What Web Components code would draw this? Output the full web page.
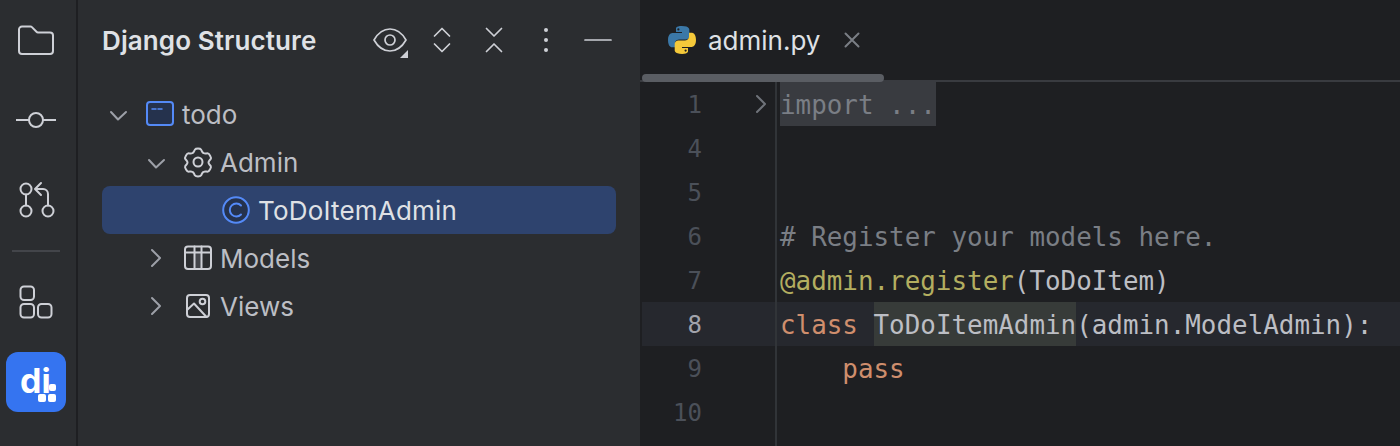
<!DOCTYPE html>
<html>
<head>
<meta charset="utf-8">
<title>Django Structure</title>
<style>
    html, body { margin: 0; height: 100%; background: #1e1f22; overflow: hidden; }
    body { display: flex; height: 446px; font-family: Inter, "Liberation Sans", sans-serif; }
</style>
</head>
<body>
<tool-stripe></tool-stripe>
<structure-panel>
    <tree-row level="0" arrow="open" icon="module">todo</tree-row>
    <tree-row level="1" arrow="open" icon="gear">Admin</tree-row>
    <tree-row level="2" icon="class" selected>ToDoItemAdmin</tree-row>
    <tree-row level="1" arrow="closed" icon="table">Models</tree-row>
    <tree-row level="1" arrow="closed" icon="image">Views</tree-row>
</structure-panel>
<editor-pane>
    <code-line num="1" fold><span class="folded">import ...</span></code-line>
    <code-line num="4"></code-line>
    <code-line num="5"></code-line>
    <code-line num="6"><span style="color:#7a7e85"># Register your models here.</span></code-line>
    <code-line num="7"><span style="color:#b3ae60">@admin.register</span>(ToDoItem)</code-line>
    <code-line num="8" current><span style="color:#cf8e6d">class</span> <span style="background:#373b39;display:inline-block;height:44px">ToDoItemAdmin</span>(admin.ModelAdmin):</code-line>
    <code-line num="9">    <span style="color:#cf8e6d">pass</span></code-line>
    <code-line num="10"></code-line>
    <code-line num=""></code-line>
</editor-pane>

<script>
const ICONS = {
    folder: '<path d="M3 9.500a3 3 0 0 1 3-3h8.500a2 2 0 0 1 1.400.6l4.600 4.700a2 2 0 0 0 1.400.6H34a3 3 0 0 1 3 3V31a3 3 0 0 1-3 3H6a3 3 0 0 1-3-3z"/>',
    commit: '<circle cx="20" cy="20" r="7"/><path d="M0 20h13M27 20h13"/>',
    pull: '<circle cx="10" cy="9" r="5.500"/><circle cx="10" cy="31" r="5.500"/><circle cx="32" cy="31" r="5.500"/><path d="M10 14.500v11M32 25.500V14a5 5 0 0 0-5-5h-7.500M25 3l-6 6 6 6"/>',
    structure: '<rect x="4.500" y="6.500" width="13.500" height="13.500" rx="3.500"/><rect x="4.500" y="24" width="13.500" height="13.500" rx="3.500"/><rect x="22" y="24" width="13.500" height="13.500" rx="3.500"/>',
    eye: '<path d="M4 20c4-7 10-11 16-11s12 4 16 11c-4 7-10 11-16 11S8 27 4 20z"/><circle cx="20" cy="20" r="5"/><path d="M30 38l8-8v8z" fill="#ced0d6" stroke="none"/>',
    expand: '<path d="M12.500 16l7.500-7.500 7.500 7.500M12.500 24l7.500 7.500 7.500-7.500"/>',
    collapse: '<path d="M12.500 8.500l7.500 7.500 7.500-7.500M12.500 31.500l7.500-7.500 7.500 7.500"/>',
    dots: '<circle cx="20" cy="10" r="2" fill="#ced0d6" stroke="none"/><circle cx="20" cy="20" r="2" fill="#ced0d6" stroke="none"/><circle cx="20" cy="30" r="2" fill="#ced0d6" stroke="none"/>',
    minus: '<path d="M7 20h26"/>',
    open: '<path d="M9 11l7 7.500 8-7.500" transform="translate(0 3)"/>',
    closed: '<path d="M12 8l8 8-8 8"/>',
    module: '<rect x="3" y="4" width="26" height="23" rx="3" fill="#25324d" stroke="#548af7"/><path d="M8 11h4M14 11h4" stroke="#548af7" stroke-width="1.500"/>',
    gear: '<path d="M13 3.500c.8-1.200 5.200-1.200 6 0 .9 1.300.9 2.800 2.400 3.500 1.500.9 3 .2 4.500.4 1.300.3 3.600 4 2.900 5.300-.7 1.300-2.300 2-2.300 3.800s1.600 2.500 2.300 3.800c.7 1.300-1.600 5-2.900 5.300-1.500.2-3-.5-4.500.4-1.500.7-1.500 2.200-2.400 3.500-.8 1.200-5.200 1.200-6 0-.9-1.300-.9-2.800-2.400-3.500-1.500-.9-3-.2-4.500-.4-1.300-.3-3.600-4-2.900-5.300.7-1.300 2.300-2 2.300-3.800s-1.600-2.500-2.300-3.800C2.500 11.400 4.800 7.700 6.100 7.400c1.500-.2 3 .5 4.500-.4 1.500-.7 1.500-2.200 2.400-3.500z"/><circle cx="16" cy="16" r="4.500"/>',
    class: '<circle cx="16" cy="16" r="12.800" fill="#25324d" stroke="#548af7"/><path d="M21 11.500a6.500 6.500 0 1 0 0 9" stroke="#548af7"/>',
    table: '<rect x="13" y="9" width="6" height="18" fill="#43454a" stroke="none"/><rect x="3" y="4.500" width="26" height="22.500" rx="3"/><path d="M3 10.500h26M12.500 4.500V27M19.500 4.500V27"/>',
    image: '<rect x="5" y="5" width="22" height="22" rx="3"/><circle cx="20.500" cy="11.500" r="2.800"/><path d="M5 20l7-6.500L24.500 27"/>',
    python: '<path fill="#3b78a8" fill-rule="evenodd" d="M13.800 0C7.500 0 8 2.700 8 2.700V6h6v1H5S0 6.400 0 14s4.200 7.300 4.200 7.300H7v-3.500s-.1-4.200 4.100-4.200h6.200s4 .1 4-3.800V3.900S22 0 13.800 0zM10.400 2.300a1.100 1.100 0 1 1 0 2.200 1.100 1.100 0 0 1 0-2.200z"/><path fill="#f5c93a" fill-rule="evenodd" transform="rotate(180 14 14)" d="M13.800 0C7.500 0 8 2.700 8 2.700V6h6v1H5S0 6.400 0 14s4.200 7.300 4.200 7.300H7v-3.500s-.1-4.200 4.100-4.200h6.200s4 .1 4-3.800V3.900S22 0 13.800 0zM10.400 2.300a1.100 1.100 0 1 1 0 2.200 1.100 1.100 0 0 1 0-2.200z"/>'
};

function icon(name, size, view, color, width) {
    return `<svg width="${size}" height="${size}" viewBox="0 0 ${view} ${view}" fill="none" stroke="${color || '#ced0d6'}" stroke-width="${width || 2}" stroke-linecap="round" stroke-linejoin="round">${ICONS[name]}</svg>`;
}

class ToolStripe extends HTMLElement {
    constructor() {
        super();
        this.attachShadow({ mode: 'open' });
        this.shadowRoot.innerHTML = `
        <style>
            :host {
                display: flex;
                flex-direction: column;
                align-items: center;
                width: 72px;
                padding-right: 4px;
                flex: none;
                background: #2b2d30;
                border-right: 2px solid #1e1f22;
            }
            .btn { width: 40px; height: 40px; display: block; }
            .btn svg { display: block; }
            hr { width: 48px; height: 2px; margin: 0; border: 0; background: #43454a; }
            .plugin {
                width: 60px;
                height: 60px;
                border-radius: 12px;
                background: #3574f0;
            }
            .plugin svg { display: block; }
            .plugin text { font: 700 34px Inter, sans-serif; fill: #fff; }
        </style>
        <span class="btn" style="margin-top:20px">${icon('folder', 40, 40)}</span>
        <span class="btn" style="margin-top:40px">${icon('commit', 40, 40)}</span>
        <span class="btn" style="margin-top:40px">${icon('pull', 40, 40)}</span>
        <hr style="margin-top:30px">
        <span class="btn" style="margin-top:28px">${icon('structure', 40, 40)}</span>
        <div class="plugin" style="margin-top:32px">
            <svg width="60" height="60" viewBox="0 0 60 60">
                <text x="14" y="41">di</text>
                <rect x="43" y="32" width="7" height="7" rx="2" fill="#fff"/>
                <rect x="32" y="42" width="8" height="8" rx="2" fill="#fff"/>
                <rect x="42" y="42" width="8" height="8" rx="2" fill="#fff"/>
            </svg>
        </div>`;
    }
}

class StructurePanel extends HTMLElement {
    constructor() {
        super();
        this.attachShadow({ mode: 'open' });
        this.shadowRoot.innerHTML = `
        <style>
            :host {
                display: block;
                width: 562px;
                flex: none;
                background: #2b2d30;
                box-sizing: border-box;
            }
            header {
                display: flex;
                align-items: center;
                height: 82px;
                padding: 0 22px 2px 24px;
                box-sizing: border-box;
                gap: 12px;
            }
            h1 {
                margin: 0 auto 0 0;
                font: 600 26px Inter, sans-serif;
                letter-spacing: .1px;
                color: #dfe1e5;
            }
            header svg { display: block; }
            .tree {
                display: flex;
                flex-direction: column;
                margin: 8px 24px 0;
            }
        </style>
        <header>
            <h1>Django Structure</h1>
            ${['eye', 'expand', 'collapse', 'dots', 'minus'].map(n => icon(n, 40, 40, '#ced0d6', 1.7)).join('')}
        </header>
        <div class="tree"><slot></slot></div>`;
    }
}

class TreeRow extends HTMLElement {
    constructor() {
        super();
        this.attachShadow({ mode: 'open' });
    }

    connectedCallback() {
        const level = Number(this.getAttribute('level') || 0);
        const arrow = this.getAttribute('arrow');
        const name = this.getAttribute('icon');
        this.shadowRoot.innerHTML = `
        <style>
            :host {
                display: flex;
                align-items: center;
                height: 48px;
                border-radius: 8px;
                color: #bcbec4;
                font: 400 26px Inter, sans-serif;
            }
            :host([selected]) { background: #2e436e; color: #dfe1e5; letter-spacing: .2px; }
            .arrow { width: 32px; height: 32px; margin-right: 10px; flex: none; }
            .ic { width: 32px; height: 32px; margin-right: 6px; flex: none; }
            svg { display: block; }
        </style>
        <span style="width:${level * 38}px;flex:none"></span>
        <span class="arrow">${arrow ? icon(arrow, 32, 32, '#9da0a8') : ''}</span>
        <span class="ic">${icon(name, 32, 32)}</span>
        <slot></slot>`;
    }
}

class EditorPane extends HTMLElement {
    constructor() {
        super();
        this.attachShadow({ mode: 'open' });
        this.shadowRoot.innerHTML = `
        <style>
            :host {
                display: block;
                flex: 1;
                min-width: 0;
                position: relative;
                background: #1e1f22;
                overflow: hidden;
            }
            .tabs {
                display: flex;
                align-items: center;
                height: 80px;
                border-bottom: 2px solid #393b40;
                padding-left: 28px;
                color: #dfe1e5;
                font: 400 26px Inter, sans-serif;
            }
            .tabs svg { display: block; flex: none; }
            .name { margin-left: 12px; }
            .close { margin-left: 23px; }
            .underline {
                position: absolute;
                left: 2px;
                top: 74px;
                width: 242px;
                height: 8px;
                border-radius: 4px;
                background: #5a5d63;
            }
        </style>
        <div class="tabs">
            <svg width="28" height="28" viewBox="0 0 28 28">${ICONS.python}</svg>
            <span class="name">admin.py</span>
            <svg class="close" width="18" height="18" viewBox="0 0 18 18" fill="none" stroke="#7a7e85" stroke-width="2" stroke-linecap="round"><path d="M2.500 2.500l13 13M15.500 2.500l-13 13"/></svg>
        </div>
        <div class="underline"></div>
        <slot></slot>`;
    }
}

class CodeLine extends HTMLElement {
    constructor() {
        super();
        this.attachShadow({ mode: 'open' });
    }

    connectedCallback() {
        this.shadowRoot.innerHTML = `
        <style>
            :host {
                display: flex;
                height: 44px;
                margin-left: 2px;
                font: 400 25.900px/46px "DejaVu Sans Mono", "Liberation Mono", monospace;
                color: #bcbec4;
                white-space: pre;
            }
            :host([current]) { background: #26282e; }
            .num {
                width: 60px;
                flex: none;
                text-align: right;
                font-size: 24px;
                color: #4b5059;
            }
            :host([current]) .num { color: #a1a3ab; }
            .fold {
                width: 75px;
                height: 44px;
                flex: none;
                box-sizing: border-box;
                border-right: 2px solid #313438;
                display: flex;
                align-items: center;
                padding-left: 51px;
            }
            .fold svg { display: block; }
            .code { padding-left: 3px; height: 44px; }
            ::slotted(.folded) {
                display: inline-block;
                height: 46px;
                margin-top: -2px;
                line-height: 50px;
                background: #393b40;
                color: #7a7e85;
            }
        </style>
        <span class="num">${this.getAttribute('num')}</span>
        <span class="fold">${this.hasAttribute('fold') ? '<svg width="20" height="24" viewBox="0 0 20 24" fill="none" stroke="#6f737a" stroke-width="2" stroke-linecap="round" stroke-linejoin="round"><path d="M4 4l8 8-8 8"/></svg>' : ''}</span>
        <span class="code"><slot></slot></span>`;
    }
}

customElements.define('tool-stripe', ToolStripe);
customElements.define('structure-panel', StructurePanel);
customElements.define('tree-row', TreeRow);
customElements.define('editor-pane', EditorPane);
customElements.define('code-line', CodeLine);
</script>
</body>
</html>
